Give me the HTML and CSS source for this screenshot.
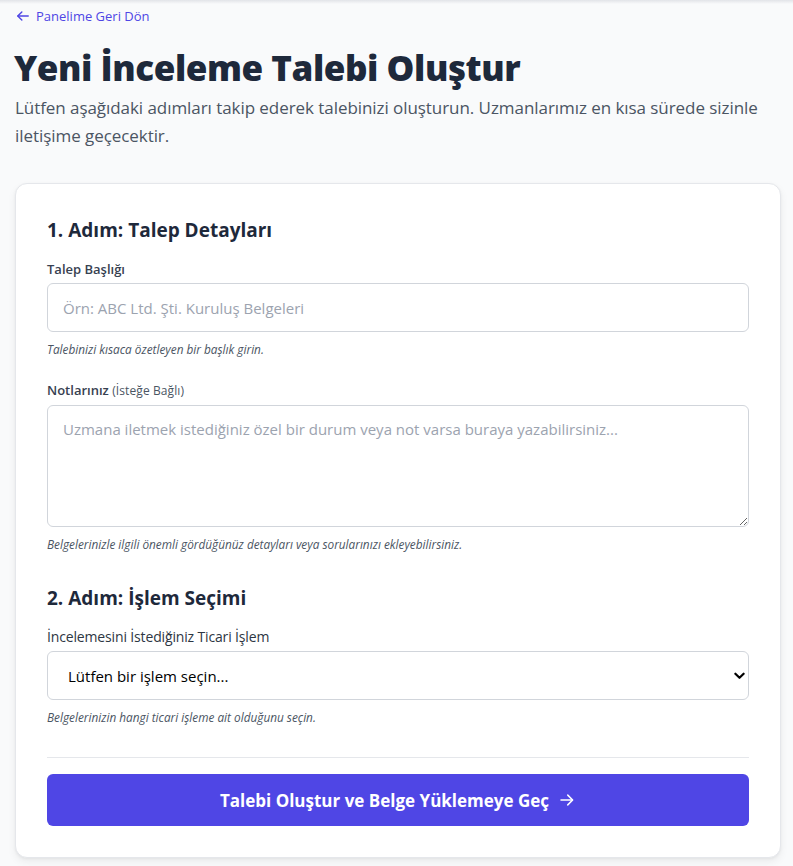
FILE: index.html
```html
<!DOCTYPE html>
<html lang="tr">
<head>
<meta charset="utf-8">
<title>Yeni İnceleme Talebi Oluştur</title>
<link rel="stylesheet" href="styles.css">
</head>
<body>
<div class="topshadow"></div>
<main class="page">
  <a class="back" href="#">
    <svg class="back-icon" viewBox="0 0 24 24" width="14" height="14" fill="none" stroke="currentColor" stroke-width="2.4" stroke-linecap="round" stroke-linejoin="round"><path d="M21 12H3.5"/><path d="M10 5l-7 7 7 7"/></svg>
    <span>Panelime Geri Dön</span>
  </a>
  <h1 class="title">Yeni İnceleme Talebi Oluştur</h1>
  <p class="lead">Lütfen aşağıdaki adımları takip ederek talebinizi oluşturun. Uzmanlarımız en kısa sürede sizinle iletişime geçecektir.</p>

  <form class="card">
    <h2 class="step">1. Adım: Talep Detayları</h2>
    <div class="field">
      <label class="label" for="t">Talep Başlığı</label>
      <input id="t" class="input" type="text" placeholder="Örn: ABC Ltd. Şti. Kuruluş Belgeleri">
      <p class="help">Talebinizi kısaca özetleyen bir başlık girin.</p>
    </div>
    <div class="field">
      <label class="label" for="n">Notlarınız <span class="opt">(İsteğe Bağlı)</span></label>
      <textarea id="n" class="input textarea" placeholder="Uzmana iletmek istediğiniz özel bir durum veya not varsa buraya yazabilirsiniz..."></textarea>
      <p class="help">Belgelerinizle ilgili önemli gördüğünüz detayları veya sorularınızı ekleyebilirsiniz.</p>
    </div>

    <h2 class="step step2">2. Adım: İşlem Seçimi</h2>
    <div class="field">
      <label class="label normal" for="s">İncelemesini İstediğiniz Ticari İşlem</label>
      <div class="select-wrap">
        <select id="s" class="input select">
          <option>Lütfen bir işlem seçin...</option>
        </select>
        <svg class="chev" viewBox="0 0 12 8" width="11" height="8"><path d="M1.5 1.5L6 6l4.5-4.5" fill="none" stroke="#000" stroke-width="2.4" stroke-linecap="round" stroke-linejoin="round"/></svg>
      </div>
      <p class="help">Belgelerinizin hangi ticari işleme ait olduğunu seçin.</p>
    </div>

    <hr class="divider">
    <button class="submit" type="button">Talebi Oluştur ve Belge Yüklemeye Geç
      <svg viewBox="0 0 24 24" width="18" height="18" fill="none" stroke="currentColor" stroke-width="2" stroke-linecap="round" stroke-linejoin="round"><path d="M4 12h15"/><path d="M13 5.5l6.5 6.5-6.5 6.5"/></svg>
    </button>
  </form>
</main>
</body>
</html>
```
FILE: styles.css
```css
* { box-sizing: border-box; }
html, body { margin: 0; padding: 0; }
body {
  background: #f9fafb;
  font-family: "Open Sans", "Noto Sans", sans-serif;
  color: #1f2937;
}
.topshadow {
  height: 4px;
  background: linear-gradient(#e2e4e8, rgba(249,250,251,0));
}
.page {
  padding: 3px 12px 0 15px;
}
.back {
  display: flex;
  width: max-content;
  align-items: center;
  gap: 6px;
  color: #4f46e5;
  text-decoration: none;
  font-size: 13px;
  line-height: 18px;
  height: 18px;
  margin-left: 1px;
}
.title {
  margin: 21px 0 0 -1px;
  font-size: 35px;
  font-weight: 800;
  line-height: 44px;
  color: #1e293b;
  letter-spacing: -0.45px;
}
.lead {
  margin: 4px 0 0 0;
  font-size: 17px;
  line-height: 28px;
  color: #4b5563;
  letter-spacing: -0.06px;
}
.card {
  margin: 33px 0 9px 0;
  background: #fff;
  border: 1px solid #e5e7eb;
  border-radius: 12px;
  box-shadow: 0 4px 8px rgba(0,0,0,0.06), 0 1px 3px rgba(0,0,0,0.05);
  padding: 32px 31px 31px 31px;
}
.step {
  margin: 0 0 15px 0;
  font-size: 19px;
  font-weight: 700;
  line-height: 28px;
  color: #1e293b;
  letter-spacing: 0;
}
.step2 { margin-top: 32px; }
.field { margin-bottom: 23px; }
.field:last-of-type { margin-bottom: 0; }
.label {
  display: block;
  font-size: 13px;
  font-weight: 600;
  color: #374151;
  line-height: 20px;
  margin-bottom: 4px;
}
.label.normal {
  font-weight: 500;
  font-size: 14px;
  letter-spacing: -0.15px;
  color: #2d3643;
}
.opt {
  font-size: 12px;
  font-weight: 400;
  color: #4b5563;
  letter-spacing: 0.1px;
}
.input {
  display: block;
  width: 100%;
  height: 49px;
  border: 1px solid #d1d5db;
  border-radius: 6px;
  background: #fff;
  font-family: inherit;
  font-size: 15px;
  color: #111827;
  padding: 0 15px;
  outline: none;
}
.input::placeholder { color: #9ca3af; }
.textarea {
  height: 122px;
  padding: 11px 15px;
  line-height: 24px;
  resize: vertical;
}
.select-wrap { position: relative; }
.select {
  appearance: none;
  -webkit-appearance: none;
  padding: 0 20px;
  color: #000;
  font-size: 15px;
}
.chev {
  position: absolute;
  right: 4px;
  top: 21px;
}
.help {
  margin: 9px 0 0 0;
  font-size: 11.8px;
  font-style: italic;
  color: #4b5563;
  line-height: 16px;
}
.divider {
  border: 0;
  border-top: 1px solid #e5e7eb;
  margin: 32px 0 16px 0;
}
.submit {
  display: flex;
  align-items: center;
  justify-content: center;
  gap: 9px;
  width: 100%;
  height: 52px;
  border: 0;
  border-radius: 6px;
  background: #4f46e5;
  color: #fff;
  font-family: inherit;
  font-size: 17px;
  font-weight: 700;
  cursor: pointer;
}
```
